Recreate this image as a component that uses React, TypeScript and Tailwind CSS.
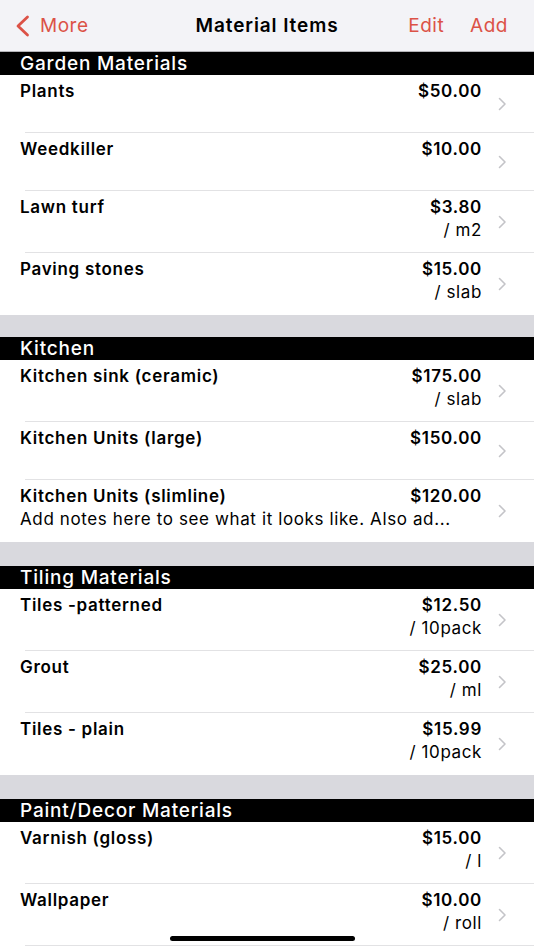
import React from "react";

type Item = { name: string; price: string; unit?: string; note?: string };
type Section = { title: string; items: Item[] };

const sections: Section[] = [
  {
    title: "Garden Materials",
    items: [
      { name: "Plants", price: "$50.00" },
      { name: "Weedkiller", price: "$10.00" },
      { name: "Lawn turf", price: "$3.80", unit: "/ m2" },
      { name: "Paving stones", price: "$15.00", unit: "/ slab" },
    ],
  },
  {
    title: "Kitchen",
    items: [
      { name: "Kitchen sink (ceramic)", price: "$175.00", unit: "/ slab" },
      { name: "Kitchen Units (large)", price: "$150.00" },
      {
        name: "Kitchen Units (slimline)",
        price: "$120.00",
        note: "Add notes here to see what it looks like. Also ad...",
      },
    ],
  },
  {
    title: "Tiling Materials",
    items: [
      { name: "Tiles -patterned", price: "$12.50", unit: "/ 10pack" },
      { name: "Grout", price: "$25.00", unit: "/ ml" },
      { name: "Tiles - plain", price: "$15.99", unit: "/ 10pack" },
    ],
  },
  {
    title: "Paint/Decor Materials",
    items: [
      { name: "Varnish (gloss)", price: "$15.00", unit: "/ l" },
      { name: "Wallpaper", price: "$10.00", unit: "/ roll" },
    ],
  },
];

function Chevron() {
  return (
    <svg width="9" height="14" viewBox="0 0 9 14" fill="none">
      <path d="M1.5 1.5L7 7L1.5 12.5" stroke="#c4c4c8" strokeWidth="1.6" strokeLinecap="round" strokeLinejoin="round" />
    </svg>
  );
}

function Row({ item, lineVisible }: { item: Item; lineVisible: boolean }) {
  const two = !!(item.unit || item.note);
  return (
    <div className="bg-white">
      <div className={`flex ${two ? "h-[61px]" : "h-[57px]"}`}>
        <div className="flex flex-1 flex-col pl-[20px] pt-[5px] min-w-0">
          <div className="flex justify-between leading-[23px] text-[17px] font-semibold tracking-[0.7px] text-black">
            <span>{item.name}</span>
            <span>{item.price}</span>
          </div>
          {item.unit && (
            <div className="text-right leading-[23px] text-[17px] tracking-[0.6px] text-black">{item.unit}</div>
          )}
          {item.note && (
            <div className="leading-[23px] text-[17px] tracking-[0.62px] text-black whitespace-nowrap">
              {item.note}
            </div>
          )}
        </div>
        <div className="flex w-[52px] items-center pl-[16px]">
          <Chevron />
        </div>
      </div>
      <div className={`ml-[25px] h-[1px] ${lineVisible ? "bg-[#e2e2e4]" : "bg-white"}`} />
    </div>
  );
}

export default function App() {
  return (
    <div
      className="relative w-[534px] h-[950px] overflow-hidden bg-white"
      style={{ fontFamily: "Inter, 'Liberation Sans', sans-serif" }}
    >
      <div className="relative flex h-[50px] items-center justify-between bg-[#f3f3f7] border-b border-[#b4b4b8] box-content pt-[1px]">
        <div className="flex items-center pl-[15px] gap-[10px] text-[19px] tracking-[0.5px] text-[#dc5247]">
          <svg width="15" height="22" viewBox="0 0 15 22" fill="none">
            <path d="M12.5 2L3 11L12.5 20" stroke="#dc5247" strokeWidth="2.8" strokeLinecap="round" strokeLinejoin="round" />
          </svg>
          <span>More</span>
        </div>
        <div className="absolute left-0 right-0 top-[1px] flex h-[50px] items-center justify-center pointer-events-none">
          <span className="text-[19px] font-semibold tracking-[0.9px] text-black">Material Items</span>
        </div>
        <div className="flex items-center gap-[26px] pr-[26px] text-[19px] tracking-[0.5px] text-[#dc5247]">
          <span>Edit</span>
          <span>Add</span>
        </div>
      </div>
      {sections.map((s, si) => (
        <div key={s.title}>
          {si > 0 && <div className={`bg-[#d9d9de] ${si === 1 ? "h-[22px]" : "h-[24px]"}`} />}
          <div className="flex h-[23px] items-center bg-black pl-[20px] text-[19px] font-medium tracking-[0.8px] text-white leading-none">
            {s.title}
          </div>
          {s.items.map((it, ii) => (
            <Row
              key={it.name}
              item={it}
              lineVisible={ii < s.items.length - 1 || si === sections.length - 1}
            />
          ))}
        </div>
      ))}
      <div className="absolute bottom-[9px] left-[170px] h-[5px] w-[185px] rounded-full bg-black" />
    </div>
  );
}
